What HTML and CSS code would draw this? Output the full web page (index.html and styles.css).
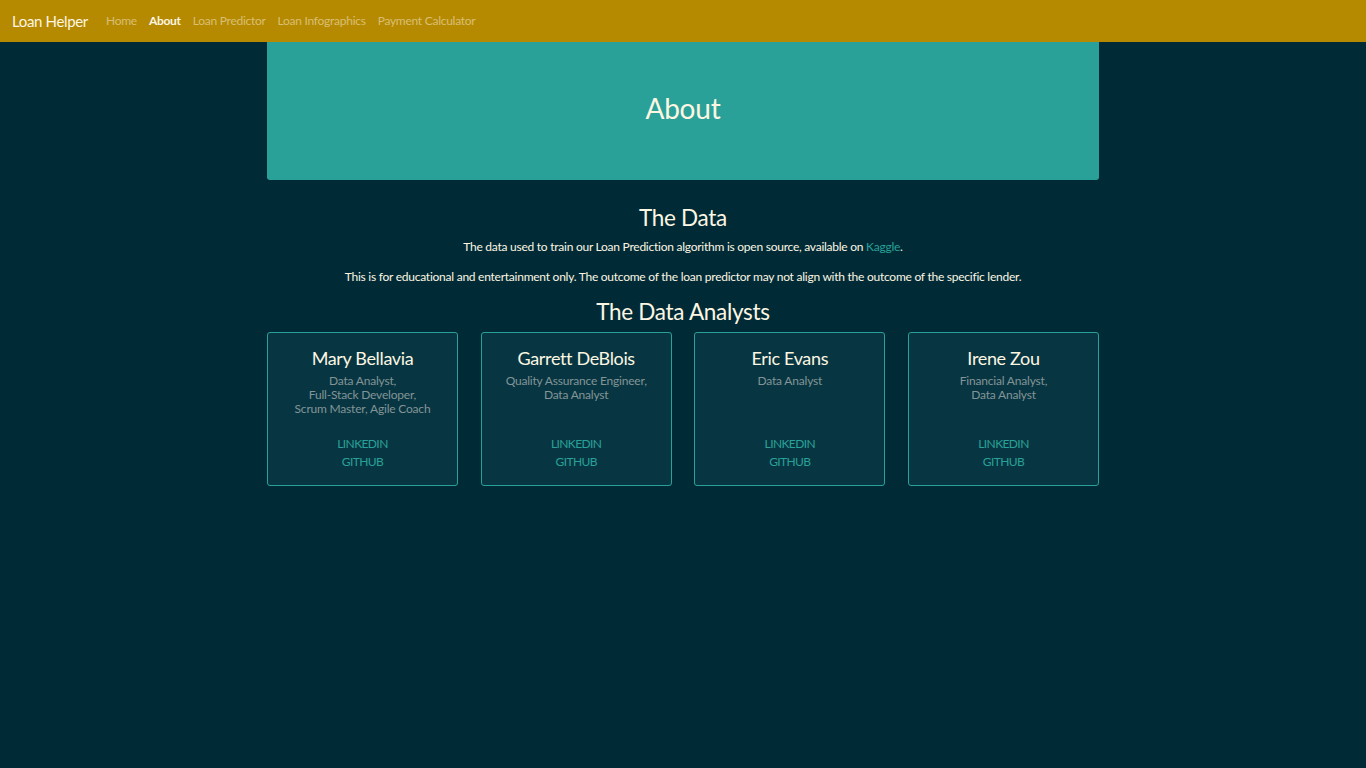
FILE: index.html
```html
<!DOCTYPE html>
<html lang="en">
<head>
<meta charset="utf-8">
<title>Loan Helper - About</title>
<link rel="stylesheet" href="styles.css">
</head>
<body>
<nav class="navbar">
  <a class="brand" href="#">Loan Helper</a>
  <ul class="nav">
    <li><a class="nav-link" href="#">Home</a></li>
    <li><a class="nav-link active" href="#">About</a></li>
    <li><a class="nav-link" href="#">Loan Predictor</a></li>
    <li><a class="nav-link" href="#">Loan Infographics</a></li>
    <li><a class="nav-link" href="#">Payment Calculator</a></li>
  </ul>
</nav>
<main class="container">
  <header class="jumbotron">
    <h1>About</h1>
  </header>
  <section class="data">
    <h2>The Data</h2>
    <p>The data used to train our Loan Prediction algorithm is open source, available on <a href="#">Kaggle</a>.</p>
    <p>This is for educational and entertainment only. The outcome of the loan predictor may not align with the outcome of the specific lender.</p>
  </section>
  <section class="analysts">
    <h2>The Data Analysts</h2>
    <div class="cards">
      <div class="card">
        <h3 class="card-title">Mary Bellavia</h3>
        <p class="card-subtitle">Data Analyst,<br>Full-Stack Developer,<br>Scrum Master, Agile Coach</p>
        <div class="card-links"><a href="#">LinkedIn</a><a href="#">GitHub</a></div>
      </div>
      <div class="card">
        <h3 class="card-title">Garrett DeBlois</h3>
        <p class="card-subtitle">Quality Assurance Engineer,<br>Data Analyst</p>
        <div class="card-links"><a href="#">LinkedIn</a><a href="#">GitHub</a></div>
      </div>
      <div class="card">
        <h3 class="card-title">Eric Evans</h3>
        <p class="card-subtitle">Data Analyst</p>
        <div class="card-links"><a href="#">LinkedIn</a><a href="#">GitHub</a></div>
      </div>
      <div class="card">
        <h3 class="card-title">Irene Zou</h3>
        <p class="card-subtitle">Financial Analyst,<br>Data Analyst</p>
        <div class="card-links"><a href="#">LinkedIn</a><a href="#">GitHub</a></div>
      </div>
    </div>
  </section>
</main>
</body>
</html>
```
FILE: styles.css
```css
* { box-sizing: border-box; }
html, body {
  margin: 0;
  padding: 0;
  background: #002b36;
  color: #fdf6e3;
  font-family: Lato, "Liberation Sans", sans-serif;
  font-size: 12px;
  line-height: 1.5;
}
a { text-decoration: none; }

.navbar {
  height: 42px;
  background: #b58900;
  display: flex;
  align-items: center;
  padding: 0 12px;
}
.brand {
  color: #fdf6e3;
  font-size: 15px;
  margin-right: 12px;
  letter-spacing: -0.35px;
}
.nav {
  list-style: none;
  display: flex;
  margin: 0;
  padding: 0;
}
.nav-link {
  display: block;
  padding: 0 6px;
  color: rgba(253, 246, 227, 0.5);
  font-size: 12px;
  letter-spacing: -0.27px;
}
.nav-link.active {
  color: #fdf6e3;
  font-weight: 700;
}

.container {
  width: 832px;
  margin: 0 auto;
}
.jumbotron {
  height: 138px;
  background: #2aa198;
  border-radius: 0 0 3px 3px;
  display: flex;
  align-items: center;
  justify-content: center;
  padding-bottom: 4px;
}
.jumbotron h1 {
  margin: 0;
  font-size: 28px;
  font-weight: 400;
  line-height: 1.2;
  letter-spacing: -0.2px;
}

h2 {
  margin: 0 0 4px;
  font-size: 22.5px;
  font-weight: 400;
  line-height: 28px;
  text-align: center;
  letter-spacing: -0.3px;
}
.data {
  margin-top: 24px;
  text-align: center;
}
.data h2 { margin-bottom: 6px; }
.data p {
  margin: 0 0 12px;
  line-height: 18px;
  letter-spacing: -0.25px;
}
.data a { color: #2aa198; }

.analysts h2 { margin-bottom: 6px; }
.cards {
  display: grid;
  grid-template-columns: repeat(4, 1fr);
  gap: 22.67px;
}
.card {
  background: #073642;
  border: 1px solid #2aa198;
  border-radius: 3px;
  padding: 15px 15px 14px;
  display: flex;
  flex-direction: column;
  align-items: center;
  text-align: center;
}
.card-title {
  margin: 0 0 4px;
  font-size: 18px;
  font-weight: 400;
  line-height: 21.6px;
  letter-spacing: -0.35px;
}
.card-subtitle {
  margin: 0;
  color: #839496;
  line-height: 14px;
  letter-spacing: -0.2px;
}
.card-links {
  margin-top: auto;
  padding-top: 19px;
  display: flex;
  flex-direction: column;
  align-items: center;
}
.card-links a {
  color: #2aa198;
  text-transform: uppercase;
  line-height: 18px;
  letter-spacing: -0.6px;
}
```
